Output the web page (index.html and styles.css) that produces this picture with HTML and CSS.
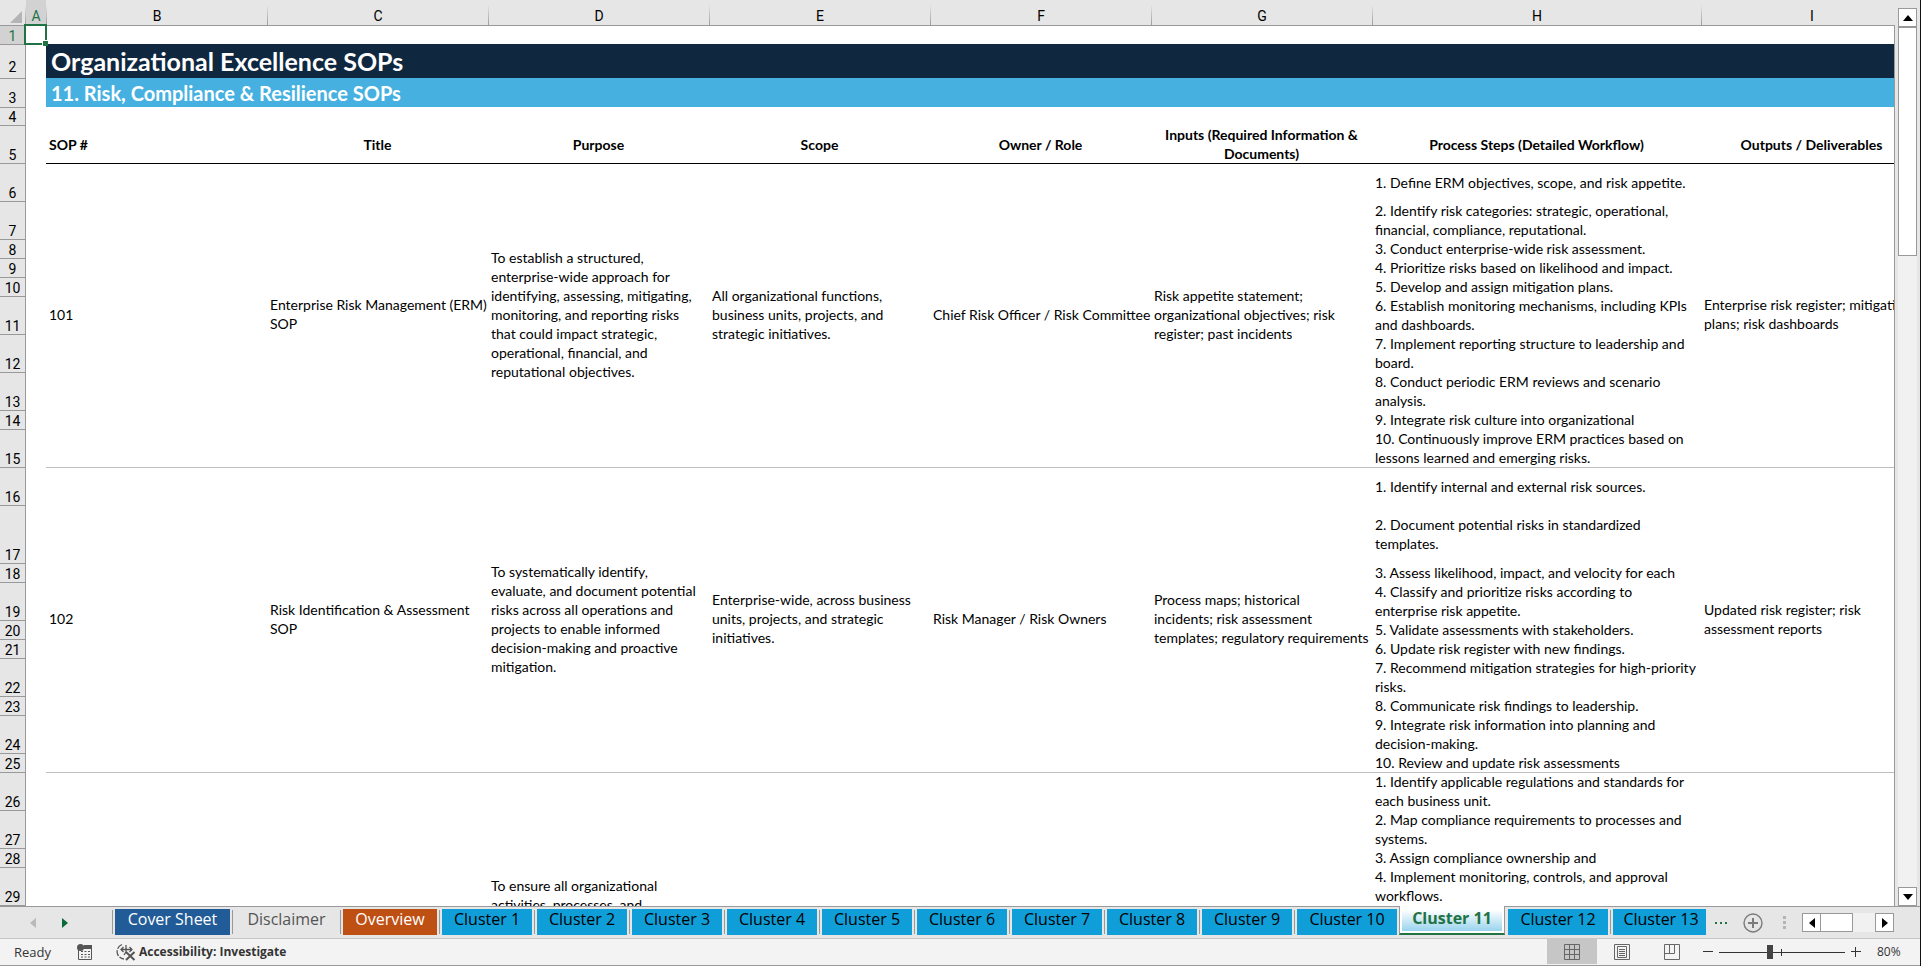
FILE: index.html
```
<!DOCTYPE html>
<html lang="en">
<head>
    <meta charset="UTF-8">
    <meta name="viewport" content="width=device-width, initial-scale=1.0">
    <title>Organizational Excellence SOPs</title>
    <link rel="stylesheet" href="styles.css">
</head>
<body>

    <!-- Worksheet -->
    <main class="workspace">
        <div class="sheet">
            <table class="grid">
                <colgroup>
                    <col class="col-num">
                    <col class="col-a">
                    <col class="col-std" span="6">
                    <col class="col-steps">
                    <col class="col-std">
                </colgroup>
                <thead>
                    <tr class="letters">
                        <th class="corner"><svg width="12" height="12" viewBox="0 0 12 12"><path d="M12 0v12H0z" fill="#b4b4b4"/></svg></th>
                        <th class="selected">A</th>
                        <th>B</th>
                        <th>C</th>
                        <th>D</th>
                        <th>E</th>
                        <th>F</th>
                        <th>G</th>
                        <th>H</th>
                        <th>I</th>
                    </tr>
                </thead>
                <tbody>
                    <tr class="h-1"><th class="selected">1</th><td class="active-cell"></td><td colspan="8"></td></tr>
                    <tr class="h-title"><th>2</th><td></td><td colspan="8" class="band band-dark">Organizational Excellence SOPs</td></tr>
                    <tr class="h-sub"><th>3</th><td></td><td colspan="8" class="band band-light">11. Risk, Compliance &amp; Resilience SOPs</td></tr>
                    <tr class="h-gap"><th>4</th><td></td><td colspan="8"></td></tr>
                    <tr class="h-2 headings">
                        <th>5</th>
                        <td></td>
                        <td class="left">SOP #</td>
                        <td>Title</td>
                        <td>Purpose</td>
                        <td>Scope</td>
                        <td>Owner / Role</td>
                        <td>Inputs (Required Information &amp;<br>Documents)</td>
                        <td>Process Steps (Detailed Workflow)</td>
                        <td>Outputs / Deliverables</td>
                    </tr>

                    <!-- SOP 101 -->
                    <tr class="h-2 first">
                        <th>6</th>
                        <td rowspan="10" class="blank"></td>
                        <td rowspan="10">101</td>
                        <td rowspan="10">Enterprise Risk Management (ERM)<br>SOP</td>
                        <td rowspan="10">To establish a structured,<br>enterprise-wide approach for<br>identifying, assessing, mitigating,<br>monitoring, and reporting risks<br>that could impact strategic,<br>operational, financial, and<br>reputational objectives.</td>
                        <td rowspan="10">All organizational functions,<br>business units, projects, and<br>strategic initiatives.</td>
                        <td rowspan="10">Chief Risk Officer / Risk Committee</td>
                        <td rowspan="10">Risk appetite statement;<br>organizational objectives; risk<br>register; past incidents</td>
                        <td>1. Define ERM objectives, scope, and risk appetite.</td>
                        <td rowspan="10">Enterprise risk register; mitigation<br>plans; risk dashboards</td>
                    </tr>
                    <tr class="h-2"><th>7</th><td>2. Identify risk categories: strategic, operational,<br>financial, compliance, reputational.</td></tr>
                    <tr class="h-1"><th>8</th><td>3. Conduct enterprise-wide risk assessment.</td></tr>
                    <tr class="h-1"><th>9</th><td>4. Prioritize risks based on likelihood and impact.</td></tr>
                    <tr class="h-1"><th>10</th><td>5. Develop and assign mitigation plans.</td></tr>
                    <tr class="h-2"><th>11</th><td>6. Establish monitoring mechanisms, including KPIs<br>and dashboards.</td></tr>
                    <tr class="h-2"><th>12</th><td>7. Implement reporting structure to leadership and<br>board.</td></tr>
                    <tr class="h-2"><th>13</th><td>8. Conduct periodic ERM reviews and scenario<br>analysis.</td></tr>
                    <tr class="h-1"><th>14</th><td>9. Integrate risk culture into organizational</td></tr>
                    <tr class="h-2"><th>15</th><td>10. Continuously improve ERM practices based on<br>lessons learned and emerging risks.</td></tr>

                    <!-- SOP 102 -->
                    <tr class="h-2 next">
                        <th>16</th>
                        <td rowspan="10" class="blank"></td>
                        <td rowspan="10">102</td>
                        <td rowspan="10">Risk Identification &amp; Assessment<br>SOP</td>
                        <td rowspan="10">To systematically identify,<br>evaluate, and document potential<br>risks across all operations and<br>projects to enable informed<br>decision-making and proactive<br>mitigation.</td>
                        <td rowspan="10">Enterprise-wide, across business<br>units, projects, and strategic<br>initiatives.</td>
                        <td rowspan="10">Risk Manager / Risk Owners</td>
                        <td rowspan="10">Process maps; historical<br>incidents; risk assessment<br>templates; regulatory requirements</td>
                        <td>1. Identify internal and external risk sources.</td>
                        <td rowspan="10">Updated risk register; risk<br>assessment reports</td>
                    </tr>
                    <tr class="h-3"><th>17</th><td>2. Document potential risks in standardized<br>templates.</td></tr>
                    <tr class="h-1"><th>18</th><td>3. Assess likelihood, impact, and velocity for each</td></tr>
                    <tr class="h-2"><th>19</th><td>4. Classify and prioritize risks according to<br>enterprise risk appetite.</td></tr>
                    <tr class="h-1"><th>20</th><td>5. Validate assessments with stakeholders.</td></tr>
                    <tr class="h-1"><th>21</th><td>6. Update risk register with new findings.</td></tr>
                    <tr class="h-2"><th>22</th><td>7. Recommend mitigation strategies for high-priority<br>risks.</td></tr>
                    <tr class="h-1"><th>23</th><td>8. Communicate risk findings to leadership.</td></tr>
                    <tr class="h-2"><th>24</th><td>9. Integrate risk information into planning and<br>decision-making.</td></tr>
                    <tr class="h-1"><th>25</th><td>10. Review and update risk assessments</td></tr>

                    <!-- SOP 103, continues below the fold -->
                    <tr class="h-2 next">
                        <th>26</th>
                        <td rowspan="5" class="blank"></td>
                        <td rowspan="5"></td>
                        <td rowspan="5"></td>
                        <td rowspan="5" class="bottom">To ensure all organizational<br>activities, processes, and</td>
                        <td rowspan="5"></td>
                        <td rowspan="5"></td>
                        <td rowspan="5"></td>
                        <td>1. Identify applicable regulations and standards for<br>each business unit.</td>
                        <td rowspan="5"></td>
                    </tr>
                    <tr class="h-2"><th>27</th><td>2. Map compliance requirements to processes and<br>systems.</td></tr>
                    <tr class="h-1"><th>28</th><td>3. Assign compliance ownership and</td></tr>
                    <tr class="h-2"><th>29</th><td>4. Implement monitoring, controls, and approval<br>workflows.</td></tr>
                    <tr class="h-1"><th></th><td></td></tr>
                </tbody>
            </table>
        </div>

        <div class="vscroll">
            <button class="scroll-btn" aria-label="Scroll up"><svg width="10" height="6" viewBox="0 0 10 6"><path d="M5 0l5 6H0z"/></svg></button>
            <div class="vthumb"></div>
            <div class="track"></div>
            <button class="scroll-btn" aria-label="Scroll down"><svg width="10" height="6" viewBox="0 0 10 6"><path d="M0 0h10L5 6z"/></svg></button>
        </div>
    </main>

    <!-- Sheet tabs -->
    <nav class="tabbar">
        <div class="tab-nav">
            <button aria-label="Previous sheets" disabled><svg width="6" height="10" viewBox="0 0 6 10"><path d="M6 0v10L0 5z" fill="#b9b9b9"/></svg></button>
            <button aria-label="Next sheets"><svg width="6" height="10" viewBox="0 0 6 10"><path d="M0 0v10l6-5z" fill="#0b6b38"/></svg></button>
        </div>
        <div class="tabs">
            <button class="tab cover">Cover Sheet</button>
            <button class="tab plain">Disclaimer</button>
            <button class="tab overview">Overview</button>
            <button class="tab">Cluster 1</button>
            <button class="tab">Cluster 2</button>
            <button class="tab">Cluster 3</button>
            <button class="tab">Cluster 4</button>
            <button class="tab">Cluster 5</button>
            <button class="tab">Cluster 6</button>
            <button class="tab">Cluster 7</button>
            <button class="tab">Cluster 8</button>
            <button class="tab">Cluster 9</button>
            <button class="tab wide">Cluster 10</button>
            <button class="tab current">Cluster 11</button>
            <button class="tab wide">Cluster 12</button>
            <button class="tab last">Cluster 13</button>
        </div>
        <button class="more" aria-label="More sheets"><svg width="12" height="2" viewBox="0 0 12 2"><path d="M0 0h2v2H0zM5 0h2v2H5zM10 0h2v2h-2z" fill="#217346"/></svg></button>
        <button class="add" aria-label="New sheet"><svg width="20" height="20" viewBox="0 0 20 20" fill="none" stroke="#7b7b7b"><circle cx="10" cy="10" r="9" stroke-width="1.4"/><path d="M10 5v10M5 10h10" stroke-width="2"/></svg></button>
        <svg class="grip" width="3" height="13" viewBox="0 0 3 13"><path d="M0 0h3v3H0zM0 5h3v3H0zM0 10h3v3H0z" fill="#b4b4b4"/></svg>
        <div class="hscroll">
            <button class="scroll-btn" aria-label="Scroll left"><svg width="6" height="10" viewBox="0 0 6 10"><path d="M6 0v10L0 5z"/></svg></button>
            <div class="hthumb"></div>
            <div class="track"></div>
            <button class="scroll-btn" aria-label="Scroll right"><svg width="6" height="10" viewBox="0 0 6 10"><path d="M0 0v10l6-5z"/></svg></button>
        </div>
    </nav>

    <!-- Status bar -->
    <footer class="status">
        <span class="ready">Ready</span>
        <button class="macro" aria-label="Record macro">
            <svg width="15" height="16" viewBox="0 0 15 16"><path d="M7 1h8v4H5z" fill="#555"/><path d="M1.500 6v9.500h13V4" fill="none" stroke="#555"/><circle cx="3.500" cy="3.500" r="3.500" fill="#555"/><path d="M4 7.500h2m1.500 0h2m1.500 0h2M4 10.500h2m1.500 0h2m1.500 0h2M4 13h2m1.500 0h2m1.500 0h2" stroke="#555"/></svg>
        </button>
        <button class="access">
            <svg width="20" height="18" viewBox="0 0 20 18" fill="none" stroke="#555"><path d="M6 1.500A7.500 7.500 0 0 0 8 16" stroke-width="1.300" stroke-dasharray="6 1.500"/><path d="M5 6.500h11M7.500 4L5 6.500 7.500 9M10 2v7l-2 3M13.500 4L16 6.500 13.500 9" stroke-width="1.300"/><path d="M10 9l8.500 8M18.500 9L10 17" stroke-width="2"/></svg>
            Accessibility: Investigate
        </button>
        <div class="views">
            <button class="pressed" aria-label="Normal view"><svg width="16" height="16" viewBox="0 0 16 16" fill="none" stroke="#666"><path d="M.5.5h15v15H.5zM5.500 0v16M10.500 0v16M0 5.500h16M0 10.500h16"/></svg></button>
            <button aria-label="Page layout view"><svg width="16" height="16" viewBox="0 0 16 16" fill="none" stroke="#666"><path d="M.5.5h15v15H.5z"/><path d="M3.500 2.500h9v11h-9zM5 5.500h6M5 7.500h6M5 9.500h6M5 11.500h6"/></svg></button>
            <button aria-label="Page break preview"><svg width="16" height="16" viewBox="0 0 16 16" fill="none" stroke="#666"><path d="M.5.5h15v15H.5zM5.500 0v9.500M10.500 0v9.500M0 9.500h10.500"/></svg></button>
        </div>
        <div class="zoom">
            <button aria-label="Zoom out"><svg width="10" height="10" viewBox="0 0 10 10"><path d="M0 4.500h10" stroke="#333"/></svg></button>
            <input type="range" min="0" max="100" value="40" aria-label="Zoom">
            <button aria-label="Zoom in"><svg width="10" height="10" viewBox="0 0 10 10"><path d="M0 4.500h10M4.500 0v10" stroke="#333"/></svg></button>
            <span class="percent">80%</span>
        </div>
    </footer>

</body>
</html>
```
FILE: styles.css
```
/* Global Styles */
* {
    box-sizing: border-box;
}

body {
    display: flex;
    flex-direction: column;
    height: 100vh;
    margin: 0;
    overflow: hidden;
    border-right: 1px solid #111;
    background-color: #e6e6e6;
    font-family: Lato, Arial, sans-serif;
    color: #000;
}

button {
    display: flex;
    align-items: center;
    justify-content: center;
    padding: 0;
    border: none;
    background: none;
    font: inherit;
    color: inherit;
    white-space: nowrap;
}

/* Worksheet */
.workspace {
    display: flex;
    flex: 1;
    min-height: 0;
}

.sheet {
    flex: 1;
    min-width: 0;
    overflow: hidden;
    position: relative;
}

/* right edge of the cell area, under the column letters */
.sheet::after {
    content: "";
    position: absolute;
    top: 25px;
    right: 0;
    bottom: 0;
    border-right: 1px solid #999;
}

.grid {
    width: 1922px;
    table-layout: fixed;
    border-spacing: 0;
    font-size: 14px;
    line-height: 19px;
}

.col-num {
    width: 25px;
}

.col-a {
    width: 21px;
}

.col-std {
    width: 221px;
}

.col-steps {
    width: 329px;
}

.grid th {
    padding: 0;
    background-color: #e6e6e6;
    font-family: Roboto, Arial, sans-serif;
    font-size: 14px;
    font-weight: normal;
    line-height: 16px;
}

.letters th {
    height: 25px;
    padding-top: 7px;
    border-left: 1px solid;
    border-image: linear-gradient(#e6e6e6 20%, #999) 1;
}

.letters .corner {
    padding: 0 3px 2px 0;
    border: none;
    text-align: right;
    vertical-align: bottom;
}

.corner svg {
    display: block;
    margin-left: auto;
}

.grid tbody th {
    border-top: 1px solid #999;
    vertical-align: bottom;
}

.grid th.selected {
    background-color: #d2d2d2;
    color: #217346;
}

.grid td {
    padding: 0 3px;
    background-color: #fff;
    white-space: nowrap;
}

.grid td[rowspan] {
    padding-bottom: 2px;
}

.grid td:nth-child(2) {
    border-left: 1px solid #999;
}

.grid tr:not(.first):not(.next):not(.headings) td:nth-child(2):last-child {
    border-left: none;
}

.h-1 {
    height: 19px;
}

.h-2 {
    height: 38px;
}

.h-3 {
    height: 58px;
}

.h-title {
    height: 34px;
}

.grid .h-title th {
    padding-bottom: 3px;
}

.h-sub {
    height: 29px;
}

.grid .h-sub th {
    padding-bottom: 1px;
}

.h-gap {
    height: 18px;
}

.grid .h-1:first-child td {
    border-top: 1px solid #999;
}

.grid td.active-cell {
    outline: 2px solid #217346;
    outline-offset: -1px;
    position: relative;
}

.active-cell::after {
    content: "";
    position: absolute;
    right: -2px;
    bottom: -2px;
    width: 5px;
    height: 5px;
    border-top: 1px solid #fff;
    border-left: 1px solid #fff;
    box-sizing: content-box;
    background-color: #217346;
}

.grid td.band {
    padding-left: 5px;
    color: #fff;
    font-weight: bold;
}

.grid td.band-dark {
    background-color: #0f2840;
    font-size: 25px;
    line-height: 34px;
}

.grid td.band-light {
    background-color: #46b1e1;
    font-size: 20px;
    line-height: 28px;
}

.headings td {
    font-weight: bold;
    text-align: center;
}

.headings .left {
    text-align: left;
}

.first td:not(.blank) {
    box-shadow: inset 0 1px #000;
}

.next td:not(.blank) {
    box-shadow: inset 0 1px #bfbfbf;
}

.grid td.bottom {
    padding-bottom: 10px;
    vertical-align: bottom;
}

/* Scroll bars */
.vscroll {
    display: flex;
    flex-direction: column;
    width: 19px;
    margin: 8px 3px 0 3px;
}

.hscroll {
    display: flex;
    width: 92px;
    height: 19px;
    margin-left: 16px;
}

.scroll-btn {
    flex: none;
    width: 19px;
    height: 19px;
    border: 1px solid #999;
    background-color: #fff;
}

.vthumb {
    height: 229px;
    border: 1px solid #999;
    background-color: #fff;
}

.hthumb {
    width: 32px;
    border: 1px solid #999;
    border-left: none;
    background-color: #fff;
}

.track {
    flex: 1;
    background-color: #f1f1f1;
}

/* Sheet tabs */
.tabbar {
    display: flex;
    align-items: center;
    height: 32px;
    border-top: 1px solid #999;
    font-family: "Open Sans", "Segoe UI", sans-serif;
    font-size: 16px;
}

.tab-nav {
    display: flex;
    gap: 26px;
    width: 112px;
    padding-left: 30px;
}

.tabs {
    display: flex;
    align-self: stretch;
    min-width: 0;
}

.tab {
    flex: none;
    position: relative;
    width: 90px;
    height: 26px;
    margin: 2px 2px 0 3px;
    padding-bottom: 6px;
    background-color: #109ed9;
}

.tab::before {
    content: "";
    position: absolute;
    left: -3px;
    top: 1px;
    bottom: 1px;
    border-left: 1px solid #999;
}

.cover {
    width: 115px;
    background-color: #215c98;
    color: #fff;
}

.plain {
    width: 103px;
    background: none;
    color: #555;
}

.overview {
    width: 94px;
    background-color: #be5014;
    color: #fff;
}

.wide {
    width: 100px;
}

.last {
    width: 93px;
    padding-left: 3px;
}

.current {
    width: 106px;
    height: 29px;
    margin: -1px 0 0 0;
    padding-bottom: 3px;
    border: 1px solid #999;
    border-top: none;
    border-bottom: 2px solid #217346;
    background: linear-gradient(#fff 15%, #8fcfeb);
    box-shadow: inset 0 0 0 2px #fff;
    font-weight: bold;
    color: #217346;
}

.current::before,
.current + .tab::before {
    display: none;
}

.more {
    margin-left: 7px;
}

.add {
    margin-left: 16px;
}

.grip {
    margin-left: 20px;
}

/* Status bar */
.status {
    display: flex;
    align-items: center;
    height: 28px;
    padding-bottom: 1px;
    border-top: 1px solid #c6c6c6;
    border-bottom: 1px solid #999;
    background-color: #f3f3f3;
    font-family: "Open Sans", "Segoe UI", sans-serif;
    font-size: 13px;
    color: #333;
}

.ready {
    width: 63px;
    padding-left: 14px;
}

.macro {
    margin-left: 14px;
}

.access {
    gap: 3px;
    margin-left: 24px;
    font-size: 12px;
    font-weight: bold;
}

.views {
    display: flex;
    align-self: stretch;
    margin-left: auto;
}

.views button {
    width: 50px;
}

.views .pressed {
    background-color: #c6c6c6;
}

.zoom {
    display: flex;
    align-items: center;
    margin-left: 6px;
}

.zoom input {
    width: 126px;
    height: 16px;
    margin: 0 6px;
    appearance: none;
    background:
        linear-gradient(#333, #333) 62px 5px / 1px 7px no-repeat,
        linear-gradient(#333, #333) 0 8px / 100% 1px no-repeat;
}

.zoom input::-webkit-slider-thumb {
    appearance: none;
    width: 6px;
    height: 14px;
    background-color: #444;
}

.percent {
    width: 59px;
    padding-left: 16px;
    font-size: 12px;
}
```
